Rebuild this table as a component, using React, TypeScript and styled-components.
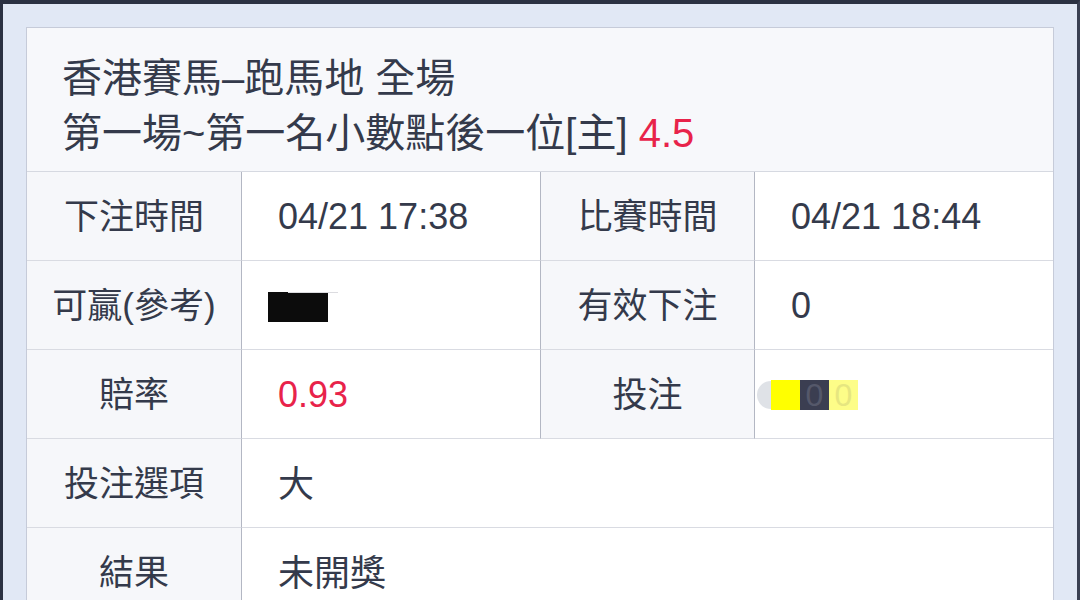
import React from "react";
import styled, { createGlobalStyle } from "styled-components";

const Global = createGlobalStyle`
  html, body {
    margin: 0;
    padding: 0;
    background: #e1e8f5;
    height: 600px;
    overflow: hidden;
  }
  body {
    font-family: "Liberation Sans", "Noto Sans CJK TC", sans-serif;
    color: #343a4b;
  }
`;

const Frame = styled.div`
  height: 600px;
  border-top: 4px solid #2b3142;
  border-left: 3px solid #2b3142;
  border-right: 3px solid #3a4052;
  box-sizing: border-box;
  padding: 23px 23px 0 23px;
`;

const Card = styled.div`
  width: 1028px;
  border: 1px solid #c6cbd9;
  border-bottom: none;
  box-sizing: border-box;
  background: #f7f8fb;
`;

const Header = styled.div`
  height: 144px;
  box-sizing: border-box;
  padding: 23px 0 0 35px;
  font-size: 40px;
  line-height: 55px;
  border-bottom: 1px solid #d6d9e1;
`;

const Red = styled.span`
  color: #e8234a;
`;

const Table = styled.div`
  display: grid;
  grid-template-columns: 215px 298px 215px 1fr;
  grid-auto-rows: 89px;
`;

const Label = styled.div<{ $sep?: boolean }>`
  display: flex;
  align-items: center;
  justify-content: center;
  padding-bottom: 5px;
  font-size: 35px;
  background: #f6f7fa;
  border-bottom: 1px solid #d9dbe2;
  border-right: 1px solid #b3b7c3;
  ${({ $sep }) => ($sep ? "border-left: 1px solid #b3b7c3;" : "")}
`;

const Value = styled.div<{ $wide?: boolean; $red?: boolean }>`
  display: flex;
  align-items: center;
  padding: 2px 0 0 36px;
  font-size: 36px;
  background: #ffffff;
  border-bottom: 1px solid #d9dbe2;
  ${({ $wide }) => ($wide ? "grid-column: span 3;" : "")}
  ${({ $red }) => ($red ? "color: #e8234a;" : "")}
`;

const CjkValue = styled.span`
  margin-top: -6px;
`;

const Redacted = styled.span`
  display: inline-block;
  width: 60px;
  height: 30px;
  margin-left: -10px;
  margin-top: 2px;
  background: #0c0c0c;
  position: relative;
  &::after {
    content: "";
    position: absolute;
    left: 20px;
    top: 0;
    width: 50px;
    height: 1px;
    background: #dcdce0;
  }
`;

const Stake = styled.div`
  display: flex;
  align-items: center;
  margin: 0 0 0 -34px;
`;

const Knob = styled.span`
  display: inline-block;
  width: 14px;
  height: 28px;
  border-radius: 14px 0 0 14px;
  background: #dfe2e7;
`;

const Block = styled.span<{ $bg: string; $fg: string }>`
  display: inline-block;
  width: 29px;
  height: 30px;
  line-height: 30px;
  text-align: center;
  background: ${({ $bg }) => $bg};
  color: ${({ $fg }) => $fg};
  font-size: 32px;
`;

const App: React.FC = () => (
  <>
    <Global />
    <Frame>
      <Card>
        <Header>
          <div>香港賽馬–跑馬地 全場</div>
          <div>
            第一場~第一名小數點後一位[主] <Red>4.5</Red>
          </div>
        </Header>
        <Table>
          <Label>下注時間</Label>
          <Value>04/21 17:38</Value>
          <Label $sep>比賽時間</Label>
          <Value>04/21 18:44</Value>

          <Label>可贏(參考)</Label>
          <Value>
            <Redacted />
          </Value>
          <Label $sep>有效下注</Label>
          <Value>0</Value>

          <Label>賠率</Label>
          <Value $red>0.93</Value>
          <Label $sep>投注</Label>
          <Value>
            <Stake>
              <Knob />
              <Block $bg="#ffff00" $fg="#ffff00">5</Block>
              <Block $bg="#3b3e51" $fg="#55586a">0</Block>
              <Block $bg="#fdfd88" $fg="#e6e680">0</Block>
            </Stake>
          </Value>

          <Label>投注選項</Label>
          <Value $wide>
            <CjkValue>大</CjkValue>
          </Value>

          <Label>結果</Label>
          <Value $wide>
            <CjkValue>未開獎</CjkValue>
          </Value>
        </Table>
      </Card>
    </Frame>
  </>
);

export default App;
